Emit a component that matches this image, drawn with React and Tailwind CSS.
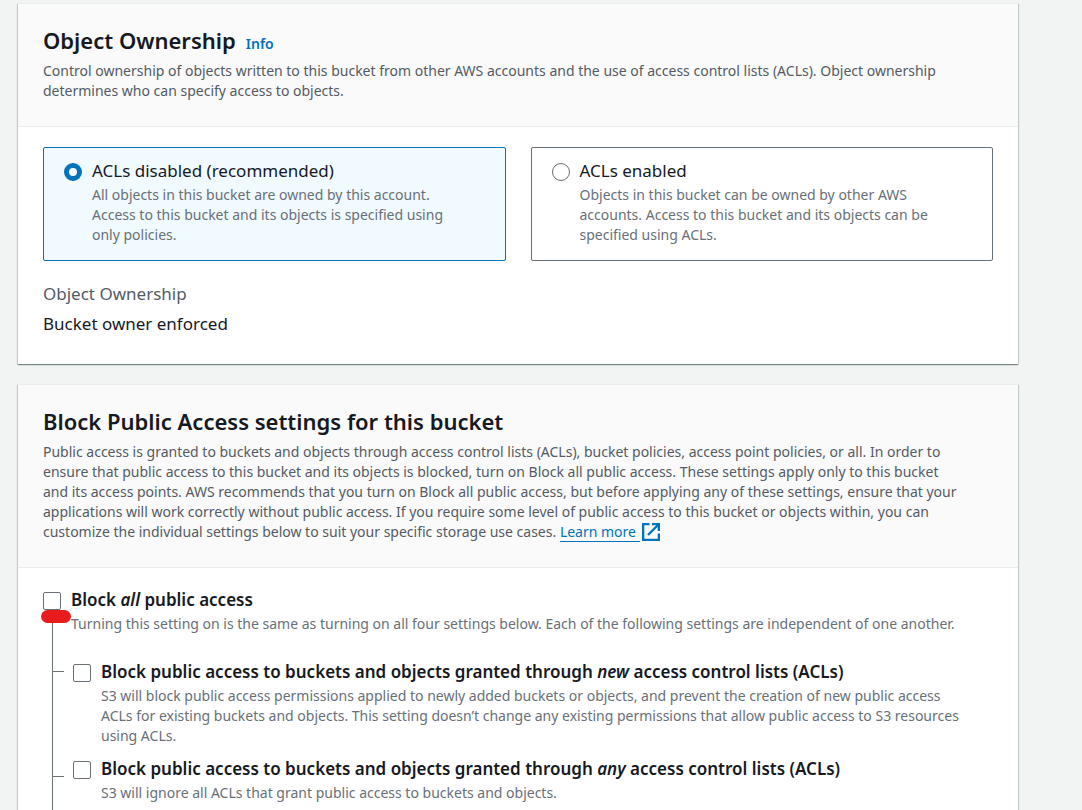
import { useState } from 'react';

function Card({ title, info, description, className = '', children }) {
  return (
    <section
      className={`flex flex-col bg-white shadow-[0_1px_1px_0_rgba(0,28,36,0.3),1px_1px_1px_0_rgba(0,28,36,0.15),-1px_1px_1px_0_rgba(0,28,36,0.15)] border-t border-[#eaeded] ${className}`}
    >
      <header className="border-b border-[#eaeded] bg-[#fafafa] px-[25px] pt-4 pb-[25px]">
        <div className="mb-px flex items-baseline gap-[10px]">
          <h2 className="text-[22px] leading-10 font-semibold text-[#16191f]">{title}</h2>
          {info}
        </div>
        <p className="text-sm leading-5 text-[#545b64]">{description}</p>
      </header>
      {children}
    </section>
  );
}

function ExternalIcon() {
  return (
    <svg
      viewBox="0 0 18 18"
      className="ml-[2px] inline-block size-[18px] align-[-4px] text-[#0073bb]"
      fill="none"
      stroke="currentColor"
      strokeWidth="2.300"
      aria-hidden="true"
    >
      <path d="M7.500 1.150H1.150v15.700h15.700v-6.350" />
      <path d="M10 1.150h6.850V8M16.500 1.500L6 12" />
    </svg>
  );
}

function Tile({ id, checked, onSelect, label, children }) {
  return (
    <label
      htmlFor={id}
      className={`flex gap-[10px] rounded-[2px] border px-[20px] pt-[10px] pb-[15px] ${
        checked ? 'border-[#0073bb] bg-[#f1faff]' : 'border-[#687078] bg-white'
      }`}
    >
      <input
        id={id}
        type="radio"
        name="acl"
        checked={checked}
        onChange={onSelect}
        className="mt-[5px] size-[18px] shrink-0 appearance-none rounded-full border border-[#687078] bg-white checked:border-[5px] checked:border-[#0073bb]"
      />
      <span className="min-w-0">
        <span className="mb-[2px] block text-[17px] leading-[25px] text-[#16191f]">{label}</span>
        <span className="block text-sm leading-5 text-[#687078]">{children}</span>
      </span>
    </label>
  );
}

function CheckRow({ id, label, children }) {
  return (
    <div className="flex gap-[10px]">
      <input
        id={id}
        type="checkbox"
        className="mt-[5px] size-[18px] shrink-0 appearance-none rounded-[2px] border border-[#687078] bg-white checked:bg-[#0073bb]"
      />
      <div className="min-w-0">
        <label htmlFor={id} className="mb-px block text-[17px] leading-[26px] font-semibold text-[#16191f]">
          {label}
        </label>
        <p className="text-sm leading-5 text-[#687078]">{children}</p>
      </div>
    </div>
  );
}

export default function App() {
  const [acl, setAcl] = useState('disabled');
  return (
    <main className="flex min-h-screen flex-col gap-5 bg-[#f2f3f3] pt-[3px] pr-16 pl-[18px] font-['Noto_Sans',sans-serif]">
      <Card
        title="Object Ownership"
        info={
          <a href="#info" className="text-sm font-semibold text-[#0073bb]">
            Info
          </a>
        }
        description="Control ownership of objects written to this bucket from other AWS accounts and the use of access control lists (ACLs). Object ownership determines who can specify access to objects."
      >
        <div className="px-[25px] pt-5 pb-[25px]">
          <div className="grid grid-cols-2 gap-[25px]">
            <Tile
              id="acl-disabled"
              checked={acl === 'disabled'}
              onSelect={() => setAcl('disabled')}
              label="ACLs disabled (recommended)"
            >
              All objects in this bucket are owned by this account.
              <br />
              Access to this bucket and its objects is specified using
              <br />
              only policies.
            </Tile>
            <Tile
              id="acl-enabled"
              checked={acl === 'enabled'}
              onSelect={() => setAcl('enabled')}
              label="ACLs enabled"
            >
              Objects in this bucket can be owned by other AWS accounts. Access to this bucket and its objects
              can be specified using ACLs.
            </Tile>
          </div>
          <dl className="mt-[18px] text-[17px] leading-[30px]">
            <dt className="text-[#545b64]">Object Ownership</dt>
            <dd className="text-[#16191f]">Bucket owner enforced</dd>
          </dl>
        </div>
      </Card>

      <Card
        className="flex-1"
        title="Block Public Access settings for this bucket"
        description={
          <>
            Public access is granted to buckets and objects through access control lists (ACLs), bucket
            policies, access point policies, or all. In order to
            <br />
            ensure that public access to this bucket and its objects is blocked, turn on Block all public
            access. These settings apply only to this bucket
            <br />
            and its access points. AWS recommends that you turn on Block all public access, but before
            applying any of these settings, ensure that your
            <br />
            applications will work correctly without public access. If you require some level of public
            access to this bucket or objects within, you can
            <br />
            customize the individual settings below to suit your specific storage use cases.{' '}
            <a href="#learn-more" className="border-b border-[#0073bb] pr-1 text-[#0073bb]">
              Learn more
            </a>
            <ExternalIcon />
          </>
        }
      >
        <div className="flex flex-1 flex-col px-[25px] pt-[19px]">
          <div className="relative">
            <CheckRow
              id="block-all"
              label={
                <>
                  Block <em>all</em> public access
                </>
              }
            >
              Turning this setting on is the same as turning on all four settings below. Each of the following
              settings are independent of one another.
            </CheckRow>
            <span className="absolute top-[23px] -left-[2px] z-10 h-[13px] w-[30px] rounded-full bg-[#e81c1e]" />
          </div>
          <div className="-mt-6 ml-[9px] flex flex-1 flex-col border-l border-[#687078] pt-[49px]">
            <div className="flex">
              <span className="mt-3 h-px w-[11px] shrink-0 bg-[#687078]" />
              <div className="ml-[9px]">
                <CheckRow
                  id="block-new"
                  label={
                    <>
                      Block public access to buckets and objects granted through <em>new</em> access control
                      lists (ACLs)
                    </>
                  }
                >
                  S3 will block public access permissions applied to newly added buckets or objects, and
                  prevent the creation of new public access
                  <br />
                  ACLs for existing buckets and objects. This setting doesn’t change any existing permissions
                  that allow public access to S3 resources
                  <br />
                  using ACLs.
                </CheckRow>
              </div>
            </div>
            <div className="mt-[10px] flex">
              <span className="mt-5 h-px w-[11px] shrink-0 bg-[#687078]" />
              <div className="ml-[9px]">
                <CheckRow
                  id="block-any"
                  label={
                    <>
                      Block public access to buckets and objects granted through <em>any</em> access control
                      lists (ACLs)
                    </>
                  }
                >
                  S3 will ignore all ACLs that grant public access to buckets and objects.
                </CheckRow>
              </div>
            </div>
          </div>
        </div>
      </Card>
    </main>
  );
}
